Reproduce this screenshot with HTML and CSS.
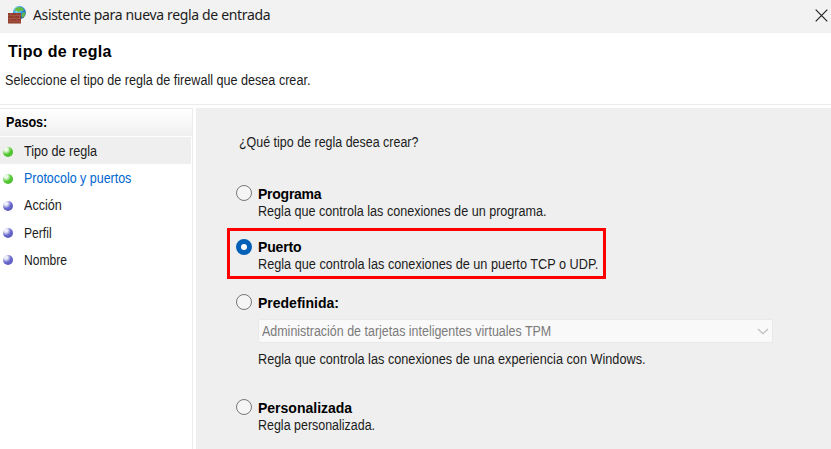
FILE: index.html
```html
<!DOCTYPE html>
<html lang="es">
<head>
<meta charset="utf-8">
<title>Asistente para nueva regla de entrada</title>
<link rel="stylesheet" href="styles.css">
</head>
<body>
<header class="titlebar">
  <svg class="app-icon" width="18" height="18" viewBox="0 0 18 18">
    <defs><radialGradient id="globe" cx=".35" cy=".3" r=".8"><stop offset="0" stop-color="#c4f1ff"/><stop offset=".4" stop-color="#3ca3e4"/><stop offset="1" stop-color="#174f9d"/></radialGradient></defs>
    <circle cx="11.4" cy="6.6" r="6.5" fill="url(#globe)"/>
    <path d="M10 .9l4 .5 2 2.2-1.7 1.6-2-.8-1.5 2-2-1.6-2.3.3 1-2.5zM14.7 7l2.8-.7-1 3.5-2 2.1-1-2.2z" fill="#66bd42"/>
    <path d="M0 7h13v10.5H0z" fill="#923c2c"/>
    <path d="M0 9.5h13M0 12.5h13M0 15.3h13M3 7v2.5M9 7v2.5M6 9.5v3M11.5 9.5v3M3 12.5v2.8M9 12.5v2.8M6 15.3v2.2M11.5 15.3v2.2" stroke="#b56a5b" stroke-width=".5" fill="none"/>
  </svg>
  <span class="window-title">Asistente para nueva regla de entrada</span>
  <svg class="close" width="13" height="13" viewBox="0 0 13 13"><path d="M.7.7l11.6 11.6M12.3.7L.7 12.3" stroke="#222" stroke-width="1.2"/></svg>
</header>
<section class="intro">
  <h1>Tipo de regla</h1>
  <p class="intro-text"><span class="t">Seleccione el tipo de regla de firewall que desea crear.</span></p>
</section>
<div class="body">
  <nav class="steps">
    <h2><span class="t">Pasos:</span></h2>
    <ul>
      <li class="current"><i class="dot green"></i><span class="t">Tipo de regla</span></li>
      <li class="link"><i class="dot green"></i><span class="t narrow">Protocolo y puertos</span></li>
      <li><i class="dot"></i><span class="t">Acción</span></li>
      <li><i class="dot"></i><span class="t tight">Perfil</span></li>
      <li><i class="dot"></i><span class="t tight">Nombre</span></li>
    </ul>
  </nav>
  <main>
    <p class="question"><span class="t narrow">¿Qué tipo de regla desea crear?</span></p>
    <div class="option program"><i class="radio"></i><div><b class="b1">Programa</b><p><span class="t">Regla que controla las conexiones de un programa.</span></p></div></div>
    <div class="option port"><i class="radio checked"></i><div><b class="b2">Puerto</b><p><span class="t wide">Regla que controla las conexiones de un puerto TCP o UDP.</span></p></div></div>
    <div class="option predefined"><i class="radio"></i><div><b>Predefinida:</b>
      <div class="select"><span class="t narrow">Administración de tarjetas inteligentes virtuales TPM</span><svg width="12" height="7" viewBox="0 0 12 7"><path d="M1 1l5 4.7L11 1" fill="none" stroke="#bdbdbd" stroke-width="1.2"/></svg></div>
      <p><span class="t wide">Regla que controla las conexiones de una experiencia con Windows.</span></p></div></div>
    <div class="option custom"><i class="radio"></i><div><b>Personalizada</b><p><span class="t narrow">Regla personalizada.</span></p></div></div>
  </main>
</div>
</body>
</html>
```
FILE: styles.css
```css
* { box-sizing: border-box; }
body, h1, h2, p, ul { margin: 0; padding: 0; }
body { width: 831px; height: 449px; overflow: hidden; background: #fff; color: #1c1c1c; font: 14px/17px "Liberation Sans", Arial, sans-serif; white-space: nowrap; }
.t { display: inline-block; transform: scaleX(.9); transform-origin: left; }
.narrow { transform: scaleX(.89); }
.wide { transform: scaleX(.907); }
.tight { transform: scaleX(.865); }
.titlebar { height: 33px; background: #f2f2f2; display: flex; align-items: center; padding: 0 3px 3px 8px; }
.window-title { font: 14px/20px "Noto Sans", sans-serif; letter-spacing: -.34px; margin-left: 7px; }
.close { margin-left: auto; }
.intro { height: 72px; border-bottom: 1px solid #ececec; padding-top: 9px; }
h1 { font-size: 16px; line-height: 20px; letter-spacing: .35px; padding-left: 8px; color: #000; }
.intro-text { padding: 10px 0 0 5px; }
.body { display: flex; height: 344px; padding-top: 3px; }
.steps { width: 193px; margin-right: 3px; border: 1px solid #ececec; border-width: 1px 1px 0 0; }
h2 { height: 27px; font-size: 14px; line-height: 27px; padding-left: 6px; color: #000; background: linear-gradient(#fff, #f0f0f0); margin-bottom: 1px; }
ul { list-style: none; padding-right: 1px; }
li { height: 27.2px; display: flex; align-items: center; padding: 2px 0 0 3px; }
.current { background: #efefef; }
.link { color: #0066d0; }
.dot { width: 10px; height: 10px; border-radius: 50%; margin-right: 11px; background: radial-gradient(circle at 30% 25%, #eeeefa 0 15%, #6868cd 48%, #5959be 80%, #8888d2); }
.green { background: radial-gradient(circle at 30% 25%, #effce9 0 15%, #57c936 48%, #48bb2c 80%, #79cc62); }
main { flex: 1; background: #efefef; padding-left: 31px; }
.question { padding: 26px 0 0 12px; height: 68px; }
.option { display: flex; }
.radio { width: 16px; height: 16px; border: 1px solid #777; border-radius: 50%; background: #f5f5f5; margin: 9px 6px 0 9px; flex: none; }
.checked { border: 5px solid #0560b8; background: #fff; }
.option > div { padding-top: 10px; }
.option b { display: block; color: #000; }
.b1 { letter-spacing: -.25px; }
.b2 { letter-spacing: -.15px; }
.program { height: 52px; }
.port { width: 379px; height: 51px; border: 3px solid #f00; }
.option.port .radio { margin-left: 6px; margin-top: 8px; }
.option.port > div { padding-top: 8px; }
.predefined { height: 105px; margin-top: 6px; }
.select { width: 515px; height: 24px; border: 1px solid #e9e9e9; border-radius: 2px; background: #f9f9f9; color: #7b7b7b; margin: 7px 0 8px; display: flex; align-items: center; justify-content: space-between; padding: 0 3px; }
```
